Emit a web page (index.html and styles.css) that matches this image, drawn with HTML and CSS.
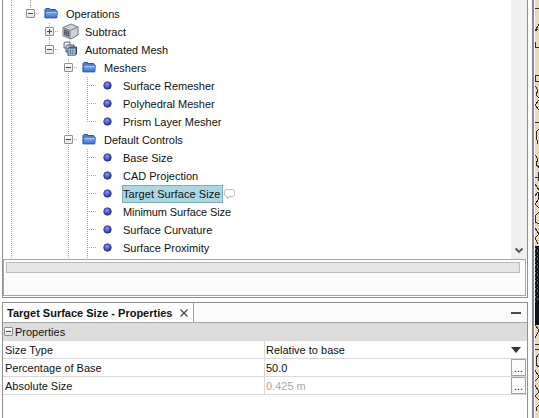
FILE: index.html
```
<!DOCTYPE html>
<html lang="en">
<head>
<meta charset="utf-8">
<title>Target Surface Size - Properties</title>
<link rel="stylesheet" href="styles.css">
</head>
<body>
<svg width="0" height="0" class="defs">
  <defs>
    <linearGradient id="fold" x1="0" y1="0" x2="0" y2="1"><stop offset="0" stop-color="#8db9f2"/><stop offset="1" stop-color="#3467ce"/></linearGradient>
    <radialGradient id="ball" cx=".42" cy=".35" r=".65"><stop offset="0" stop-color="#8f9cf2"/><stop offset=".55" stop-color="#4c5ace"/><stop offset="1" stop-color="#2a3184"/></radialGradient>
    <symbol id="folder" viewBox="0 0 14 12"><path d="M1 10.500V2.500l1-1h3.500l1 1h5l1 1v7z" fill="#4a7cd6" stroke="#2456b4"/><path d="M1 11 1.800 4.500h11.700L12.800 11z" fill="url(#fold)" stroke="#2c5dbd" stroke-width=".8"/><path d="M2.300 5.200h10.500" stroke="#b9d6fa" stroke-width=".9"/></symbol>
    <symbol id="bullet" viewBox="0 0 9 9"><circle cx="4.500" cy="4.500" r="3.800" fill="url(#ball)" stroke="#2a3070" stroke-width=".7"/></symbol>
    <symbol id="cube" viewBox="0 0 17 17"><path d="M1 4.500 9 1l7 3v8l-7 4-8-3z" fill="#cfcfd8" stroke="#6b6b75" stroke-width=".9"/><path d="M1 4.500 8 7.500V16l-7-3z" fill="#a3a3af"/><path d="M1 4.500 8 7.500 16 4M8 7.500V16" fill="none" stroke="#70707b" stroke-width=".8"/><path d="M2.500 7 6.500 8.500v4.500l-4-1.500zM4.500 8v4M2.500 9.300l4 1.400" fill="none" stroke="#4c4c59" stroke-width=".9"/></symbol>
    <symbol id="mesh" viewBox="0 0 15 16"><path d="M1 2 2 1h5v5l-1 1H1z" fill="#e5e8ee" stroke="#626a79"/><path d="M3 5.500 4.500 4H11v6l-1 1H3z" fill="#c5ccd8" stroke="#4c5668"/><path d="M5 7.500 6.500 6h7v7L12 14.500H5z" fill="#6c819f" stroke="#34445e"/><path d="M5.500 8h6.500v6.500H5.500z" fill="#b8ddea"/><path d="M7.500 8v6M9.800 8v6M5.500 10h6.500M5.500 12.300h6.500" stroke="#456e91" stroke-width=".7"/></symbol>
  </defs>
</svg>
<div class="app">
  <main class="side">
    <section class="explorer">
      <div class="view">
        <div class="tree">
          <div class="row stub"><i class="g v"></i><i class="g v"></i></div>
          <div class="row"><i class="g v"></i><i class="g top"><b class="tog"></b></i><svg class="ico"><use href="#folder"/></svg><span class="t">Operations</span></div>
          <div class="row"><i class="g v"></i><i class="g"></i><i class="g v"><b class="tog plus"></b></i><svg class="ico big"><use href="#cube"/></svg><span class="t">Subtract</span></div>
          <div class="row"><i class="g v"></i><i class="g"></i><i class="g top"><b class="tog"></b></i><svg class="ico mesh"><use href="#mesh"/></svg><span class="t">Automated Mesh</span></div>
          <div class="row"><i class="g v"></i><i class="g"></i><i class="g"></i><i class="g v"><b class="tog"></b></i><svg class="ico"><use href="#folder"/></svg><span class="t">Meshers</span></div>
          <div class="row"><i class="g v"></i><i class="g"></i><i class="g"></i><i class="g v"></i><i class="g v h"></i><svg class="dot"><use href="#bullet"/></svg><span class="t">Surface Remesher</span></div>
          <div class="row"><i class="g v"></i><i class="g"></i><i class="g"></i><i class="g v"></i><i class="g v h"></i><svg class="dot"><use href="#bullet"/></svg><span class="t">Polyhedral Mesher</span></div>
          <div class="row"><i class="g v"></i><i class="g"></i><i class="g"></i><i class="g v"></i><i class="g top h"></i><svg class="dot"><use href="#bullet"/></svg><span class="t">Prism Layer Mesher</span></div>
          <div class="row"><i class="g v"></i><i class="g"></i><i class="g"></i><i class="g v"><b class="tog"></b></i><svg class="ico"><use href="#folder"/></svg><span class="t">Default Controls</span></div>
          <div class="row"><i class="g v"></i><i class="g"></i><i class="g"></i><i class="g v"></i><i class="g v h"></i><svg class="dot"><use href="#bullet"/></svg><span class="t">Base Size</span></div>
          <div class="row"><i class="g v"></i><i class="g"></i><i class="g"></i><i class="g v"></i><i class="g v h"></i><svg class="dot"><use href="#bullet"/></svg><span class="t">CAD Projection</span></div>
          <div class="row"><i class="g v"></i><i class="g"></i><i class="g"></i><i class="g v"></i><i class="g v h"></i><svg class="dot"><use href="#bullet"/></svg><span class="t sel">Target Surface Size</span><svg class="note" viewBox="0 0 11 10"><path d="M3.500 7.500H2.500a2 2 0 0 1-2-2v-3a2 2 0 0 1 2-2h6a2 2 0 0 1 2 2v3a2 2 0 0 1-2 2H5.500L3.500 9.500z" fill="#fff" stroke="#b6b6bc" stroke-width=".9"/></svg></div>
          <div class="row"><i class="g v"></i><i class="g"></i><i class="g"></i><i class="g v"></i><i class="g v h"></i><svg class="dot"><use href="#bullet"/></svg><span class="t tight">Minimum Surface Size</span></div>
          <div class="row"><i class="g v"></i><i class="g"></i><i class="g"></i><i class="g v"></i><i class="g v h"></i><svg class="dot"><use href="#bullet"/></svg><span class="t">Surface Curvature</span></div>
          <div class="row"><i class="g v"></i><i class="g"></i><i class="g"></i><i class="g v"></i><i class="g v h"></i><svg class="dot"><use href="#bullet"/></svg><span class="t">Surface Proximity</span></div>
          <div class="row tail"><i class="g v"></i><i class="g"></i><i class="g"></i><i class="g v"></i><i class="g v"></i></div>
        </div>
        <div class="vscroll"><svg width="8" height="7" viewBox="0 0 8 7"><path d="M.5 1.500 4 5l3.500-3.500" fill="none" stroke="#505050" stroke-width="1.800"/></svg></div>
      </div>
      <div class="status"><div class="bar"></div></div>
    </section>
    <section class="props">
      <header class="tabs"><div class="tab"><span class="title">Target Surface Size - Properties</span><svg width="8" height="8" viewBox="0 0 8 8"><path d="M.5.5l7 7M7.500.5l-7 7" stroke="#444" stroke-width="1.200"/></svg></div><i class="min"></i></header>
      <div class="group"><b class="tog"></b><span>Properties</span></div>
      <div class="prop"><span class="name">Size Type</span><span class="val">Relative to base</span><svg class="arrow" width="10" height="6"><path d="M0 0h10L5 6z" fill="#333"/></svg></div>
      <div class="prop"><span class="name">Percentage of Base</span><span class="val">50.0</span><span class="btn">...</span></div>
      <div class="prop"><span class="name">Absolute Size</span><span class="val off">0.425 m</span><span class="btn">...</span></div>
    </section>
  </main>
  <aside class="scene"><svg width="4" height="418" shape-rendering="crispEdges"><path fill="#11131b" d="M0 246h4v79H0z"/><path d="M.5 248v54M2.500 250v50" stroke="#64718c" stroke-dasharray="2 3 1 2"/><path d="M0 8.500h4M4 24 0 31l3-2M0 42v6l4-1M4 75H.5v6H4M0 86l3 4-2 5 3 3M4 100 0 105l4 5M0 122.500h4M4 129 1 132v8M2 144v-4M0 155l3 4-2 5 3 4M0 177.500h4M3 172v9M0 184l4 6M0 196l3-4 1 7-4 5 4 4M4 212 0 216v6l4 2M0 228l4 6-4 4 3 6M0 325l4 5-4 8M4 332v12H0M0 349.500h4M4 354 1 358v7l3 2M0 370l4 7-4 4M0 385l4 7-4 4 4 4M4 405l-3 3v3" fill="none" stroke="#352a25"/></svg></aside>
</div>
</body>
</html>
```
FILE: styles.css
```
* { box-sizing: border-box; }
body { margin: 0; width: 539px; height: 418px; overflow: hidden; background: #fdfdfd; color: #111; font: 11px/18px "Liberation Sans", Arial, sans-serif; }
svg { display: block; flex: none; }
.defs { position: absolute; }
.app { display: flex; height: 418px; }
.side { width: 532px; padding-left: 2px; display: flex; flex-direction: column; gap: 4px; }
.explorer { width: 526px; height: 298px; border: 1px solid #909090; border-top: 0; background: #fff; }
.view { display: flex; height: 259px; }
.tree { flex: 1; overflow: hidden; }
.row { display: flex; align-items: center; height: 18px; }
.row.stub { height: 5px; }
.row.tail { height: 2px; }
.g { position: relative; width: 19px; height: 100%; flex: none; background: repeating-linear-gradient(#a8a8a8 0 1px, transparent 1px 2px) 8px 0 / 1px 0 no-repeat; }
.g.v { background-size: 1px 100%; }
.g.top { background-size: 1px 9px; }
.g.h::after, .g:has(.tog)::after { content: ""; position: absolute; left: 8px; top: 8px; width: 10px; height: 1px; background: repeating-linear-gradient(90deg, #a8a8a8 0 1px, transparent 1px 2px); }
.tog { position: absolute; z-index: 1; left: 4px; top: 4px; width: 9px; height: 9px; border: 1px solid #8f8f94; border-radius: 1px; background: linear-gradient(#334a7c, #334a7c) center / 5px 1px no-repeat, linear-gradient(#fff, #e5e5e5); }
.tog.plus { background: linear-gradient(#334a7c, #334a7c) center / 5px 1px no-repeat, linear-gradient(#334a7c, #334a7c) center / 1px 5px no-repeat, linear-gradient(#fff, #e5e5e5); }
.ico { width: 14px; height: 12px; margin: 0 7px 2px 3px; }
.ico.big { width: 17px; height: 17px; margin: 0 5px 1px 2px; }
.ico.mesh { width: 15px; height: 16px; margin: 0 6px 2px 3px; }
.dot { width: 9px; height: 9px; margin: 0 10px 1px 5px; }
.t { white-space: nowrap; height: 18px; padding: 0 1px; }
.t.sel { width: 101px; letter-spacing: .08px; background: #acd6e2; box-shadow: inset 0 0 0 1px #7baeb8; }
.t.tight { letter-spacing: -.1px; }
.note { width: 11px; height: 10px; margin: 0 0 1px 1px; }
.vscroll { width: 16px; background: #efefef; display: flex; align-items: flex-end; justify-content: center; padding-bottom: 5px; }
.status { width: 523px; height: 37px; border: 1px solid #a6a6a6; padding: 2px; background: #fbfbfb; }
.bar { width: 514px; height: 11px; border: 1px solid #bcbcbc; background: #e5e5e5; }
.props { width: 526px; flex: 1; border: 1px solid #909090; border-bottom: 0; background: #fff; }
.tabs { display: flex; justify-content: space-between; height: 20px; border-bottom: 1px solid #a6a6a6; background: #fafafa; }
.tab { display: flex; align-items: center; gap: 7px; width: 191px; padding-left: 4px; border-right: 1px solid #a0a0a0; background: #fff; }
.title { width: 166px; white-space: nowrap; font-weight: bold; }
.min { width: 10px; height: 2px; margin: 9px 6px 0 0; background: #4c4c4c; }
.group { position: relative; height: 18px; padding: 0 0 0 12px; background: #dcdcdc; }
.group .tog { left: 1px; }
.prop { display: flex; height: 18px; border-bottom: 1px solid #d9d9d9; line-height: 19px; }
.name { width: 261px; padding-left: 2px; }
.val { flex: 1; border-left: 1px solid #d9d9d9; padding-left: 1px; }
.off { color: #aaa; }
.arrow { margin: 6px 6px 0 0; }
.btn { width: 15px; height: 17px; margin-right: 1px; border: 1px solid #a0a0a0; background: #fafafa; text-align: center; line-height: 16px; }
.scene { width: 7px; padding-left: 1px; border-left: 2px solid #8b8b8f; background: linear-gradient(90deg, #fff 1px, #f1d6bc 1px); }
```
